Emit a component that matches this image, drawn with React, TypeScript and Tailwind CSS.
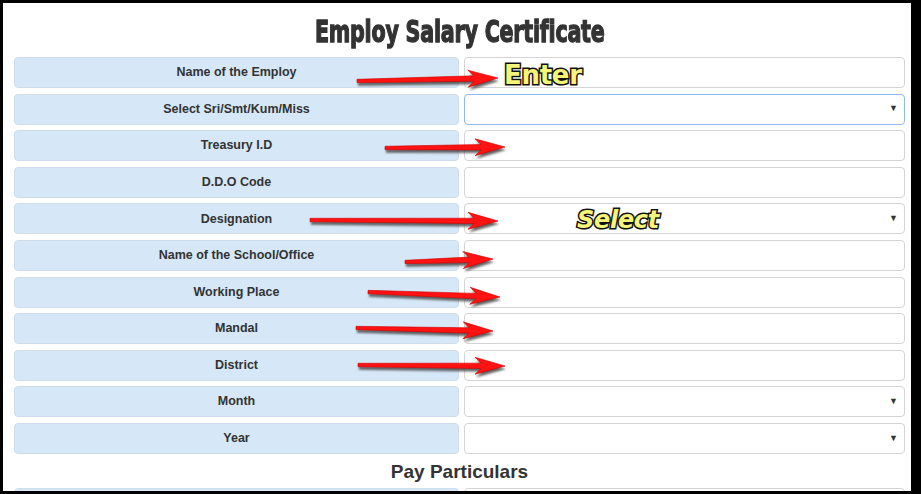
import React from 'react';

type Row = { label: string; select?: boolean; focus?: boolean };

const rows: Row[] = [
  { label: 'Name of the Employ' },
  { label: 'Select Sri/Smt/Kum/Miss', select: true, focus: true },
  { label: 'Treasury I.D' },
  { label: 'D.D.O Code' },
  { label: 'Designation', select: true },
  { label: 'Name of the School/Office' },
  { label: 'Working Place' },
  { label: 'Mandal' },
  { label: 'District' },
  { label: 'Month', select: true },
  { label: 'Year', select: true },
];

// start -> tip, page coordinates
const arrows = [
  [357, 81, 498, 78],
  [385, 148, 505, 147],
  [310, 220, 498, 221],
  [405, 262, 493, 259],
  [368, 292, 500, 297],
  [356, 328, 493, 331],
  [358, 365, 505, 366],
];

const arrowPoints = (L: number) =>
  `0,-1.7 ${L - 24},-2.7 ${L - 30},-8.5 ${L},0 ${L - 30},8.5 ${L - 24},2.7 0,1.7`;

const Arrows: React.FC = () => (
  <svg className="absolute left-0 top-0 pointer-events-none" width="921" height="494">
    <defs>
      <filter id="blur" x="-10%" y="-50%" width="120%" height="200%">
        <feGaussianBlur stdDeviation="1.3" />
      </filter>
    </defs>
    {arrows.map(([x1, y1, x2, y2], i) => {
      const L = Math.hypot(x2 - x1, y2 - y1);
      const a = (Math.atan2(y2 - y1, x2 - x1) * 180) / Math.PI;
      return (
        <g key={i}>
          <g transform={`translate(${x1 + 1},${y1 + 3}) rotate(${a})`} filter="url(#blur)">
            <polygon points={arrowPoints(L)} fill="#444" opacity="0.85" />
          </g>
          <g transform={`translate(${x1},${y1}) rotate(${a})`}>
            <polygon points={arrowPoints(L)} fill="#ff1212" stroke="#cc0000" strokeWidth="0.6" />
          </g>
        </g>
      );
    })}
  </svg>
);

const App: React.FC = () => {
  return (
    <div className="relative w-[921px] h-[494px] bg-black pt-[3px] pl-[3px] pr-[10px] pb-[3px] overflow-hidden">
      <div className="h-full bg-white flex flex-col pl-[11px] pr-[6px] overflow-hidden">
        {/* Title */}
        <div className="h-[54px] flex items-center justify-center shrink-0">
          <h1 className="inline-block scale-x-[0.74] text-[#333] text-[31px] font-bold tracking-[-0.3px] font-['DejaVu_Sans_Condensed','DejaVu_Sans',sans-serif] [-webkit-text-stroke:1.3px_#333] mt-[3px]">
            Employ Salary Certificate
          </h1>
        </div>

        {/* Form rows */}
        <div className="flex flex-col gap-[5.6px] font-['Liberation_Sans',Arial,sans-serif]">
          {rows.map((row) => (
            <div key={row.label} className="flex gap-[5px] h-[31px] shrink-0">
              <div className="w-[445px] flex items-center justify-center bg-[#d6e8f8] border border-[#cfdcea] rounded-[4px] text-[12.5px] font-bold text-[#333]">
                {row.label}
              </div>
              <div
                className={`flex-1 flex items-center justify-end pr-[6px] bg-white rounded-[4px] ${
                  row.focus ? 'border-[1.5px] border-[#8fb8ee]' : 'border border-[#d4d4d4]'
                }`}
              >
                {row.select && <span className="text-[9px] text-[#333]">▼</span>}
              </div>
            </div>
          ))}
        </div>

        {/* Pay Particulars */}
        <div className="h-[34px] flex items-center justify-center shrink-0 pt-[2px]">
          <h2 className="text-[19px] font-bold text-[#333] font-['Liberation_Sans',Arial,sans-serif]">
            Pay Particulars
          </h2>
        </div>
        <div className="flex gap-[5px] h-[31px] shrink-0">
          <div className="w-[445px] bg-[#d6e8f8] border border-[#cfdcea] rounded-[4px]" />
          <div className="flex-1 bg-white border border-[#d4d4d4] rounded-[4px]" />
        </div>
      </div>

      <Arrows />

      <span className="absolute left-[504px] top-[60px] text-[26px] leading-[30px] font-bold text-[#f4f57a] font-['DejaVu_Sans',sans-serif] [-webkit-text-stroke:3px_#111] [paint-order:stroke_fill] tracking-[-0.3px]">
        Enter
      </span>
      <span className="absolute left-[577px] top-[205px] text-[24px] leading-[30px] font-bold italic text-[#f4f57a] font-['DejaVu_Sans',sans-serif] [-webkit-text-stroke:3px_#111] [paint-order:stroke_fill] tracking-[-0.3px]">
        Select
      </span>
    </div>
  );
};

export default App;
